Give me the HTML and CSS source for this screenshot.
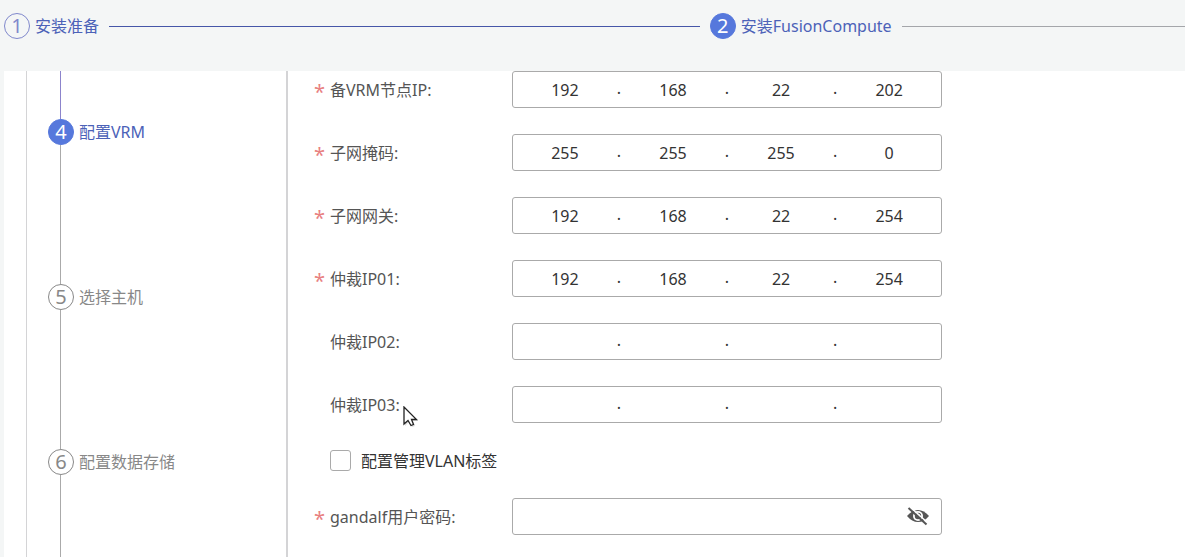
FILE: index.html
```html
<!DOCTYPE html>
<html lang="zh-CN">
<head>
<meta charset="utf-8">
<title>安装FusionCompute</title>
<link rel="stylesheet" href="styles.css">
</head>
<body>
<header class="steps">
  <div class="step step-done"><span class="num">1</span><span>安装准备</span></div>
  <span class="line line-done"></span>
  <div class="step step-active"><span class="num">2</span><span>安装FusionCompute</span></div>
  <span class="line line-next"></span>
</header>
<div class="main">
  <nav class="sidebar">
    <span class="rail rail-first"></span>
    <div class="step step-active"><span class="num">4</span><span>配置VRM</span></div>
    <span class="rail"></span>
    <div class="step step-todo"><span class="num">5</span><span>选择主机</span></div>
    <span class="rail"></span>
    <div class="step step-todo"><span class="num">6</span><span>配置数据存储</span></div>
    <span class="rail rail-last"></span>
  </nav>
  <form class="form">
    <div class="row">
      <span class="star">*</span><label class="label" for="vrm1">备VRM节点IP:</label>
      <div class="field"><input class="seg" id="vrm1" value="192"><span class="dot">.</span><input class="seg" aria-label="2" value="168"><span class="dot">.</span><input class="seg" aria-label="3" value="22"><span class="dot">.</span><input class="seg" aria-label="4" value="202"></div>
    </div>
    <div class="row">
      <span class="star">*</span><label class="label" for="mask1">子网掩码:</label>
      <div class="field"><input class="seg" id="mask1" value="255"><span class="dot">.</span><input class="seg" aria-label="2" value="255"><span class="dot">.</span><input class="seg" aria-label="3" value="255"><span class="dot">.</span><input class="seg" aria-label="4" value="0"></div>
    </div>
    <div class="row">
      <span class="star">*</span><label class="label" for="gw1">子网网关:</label>
      <div class="field"><input class="seg" id="gw1" value="192"><span class="dot">.</span><input class="seg" aria-label="2" value="168"><span class="dot">.</span><input class="seg" aria-label="3" value="22"><span class="dot">.</span><input class="seg" aria-label="4" value="254"></div>
    </div>
    <div class="row">
      <span class="star">*</span><label class="label" for="arb1">仲裁IP01:</label>
      <div class="field"><input class="seg" id="arb1" value="192"><span class="dot">.</span><input class="seg" aria-label="2" value="168"><span class="dot">.</span><input class="seg" aria-label="3" value="22"><span class="dot">.</span><input class="seg" aria-label="4" value="254"></div>
    </div>
    <div class="row">
      <span class="star"></span><label class="label" for="arb2">仲裁IP02:</label>
      <div class="field"><input class="seg" id="arb2"><span class="dot">.</span><input class="seg" aria-label="2"><span class="dot">.</span><input class="seg" aria-label="3"><span class="dot">.</span><input class="seg" aria-label="4"></div>
    </div>
    <div class="row">
      <span class="star"></span><label class="label" for="arb3">仲裁IP03:</label>
      <div class="field"><input class="seg" id="arb3"><span class="dot">.</span><input class="seg" aria-label="2"><span class="dot">.</span><input class="seg" aria-label="3"><span class="dot">.</span><input class="seg" aria-label="4"></div>
    </div>
    <div class="row row-check">
      <span class="star"></span><input class="check" type="checkbox" id="vlan"><label class="check-label" for="vlan">配置管理VLAN标签</label>
    </div>
    <div class="row">
      <span class="star">*</span><label class="label" for="pwd">gandalf用户密码:</label>
      <div class="field"><input class="pwd" type="password" id="pwd"><button class="eye" type="button" aria-label="显示密码"><svg width="22" height="20" viewBox="0 0 22 20"><path d="M0 9Q5 3 11 3T22 9Q17 15 11 15T0 9Z" fill="#555"/><circle cx="11" cy="9" r="5" fill="#fff"/><circle cx="11" cy="9" r="3.200" fill="#555"/><path d="M10.500 7.500Q12.500 7 12.500 9.500" fill="none" stroke="#fff" stroke-width="1.200"/><path d="M3 0L21 16" stroke="#fff" stroke-width="1.500"/><path d="M1.500 1L19.500 17.500" stroke="#555" stroke-width="2"/></svg></button></div>
    </div>
  </form>
</div>
<svg class="cursor" width="18" height="24" viewBox="0 0 18 24"><path d="M2 3V20L6 16L9 21L12 20L10 15H15Z" fill="#bbb" opacity=".5"/><path d="M1 1V18L5 14.500L8 19.500L10.500 18.500L8.500 13.500H13.500Z" fill="#fff" stroke="#222" stroke-width="1.300"/></svg>
</body>
</html>
```
FILE: styles.css
```css
* { box-sizing: border-box; }
body {
  margin: 0;
  height: 100vh;
  overflow: hidden;
  display: flex;
  flex-direction: column;
  background: #f4f6f6;
  color: #333;
  font: 16px/24px "Noto Sans", "Noto Sans CJK SC", sans-serif;
}
input, button { font: inherit; color: inherit; }
.steps {
  flex: none;
  display: flex;
  align-items: center;
  gap: 10px;
  padding: 13px 0 32px 4px;
}
.step {
  flex: none;
  display: flex;
  align-items: center;
  gap: 5px;
  height: 26px;
  white-space: nowrap;
}
.num {
  width: 26px;
  height: 26px;
  border: 1px solid currentColor;
  border-radius: 50%;
  font-size: 20px;
  line-height: 24px;
  text-align: center;
}
.step-done, .step-active { color: #4c62b8; }
.step-done .num { color: #8088cc; }
.step-active .num {
  background: #5678dc;
  border-color: #5678dc;
  color: #fff;
}
.step-todo { color: #888; }
.line { height: 1px; }
.line-done { flex: 590 1 0; background: #4656a8; }
.line-next { flex: 283 1 0; background: #a4a6aa; }
.main {
  flex: 1;
  min-height: 0;
  display: flex;
  margin-left: 4px;
  padding-left: 22px;
  background: #fff;
}
.sidebar {
  flex: 0 0 262px;
  display: flex;
  flex-direction: column;
  padding-left: 21px;
  border: solid #d4d4d6;
  border-width: 0 2px 0 1px;
}
.rail {
  flex: 0 0 139px;
  width: 1px;
  margin-left: 12px;
  background: #aaa;
}
.rail-first { flex-basis: 48px; background: #8c84cc; }
.rail-last { flex: 1 1 0; }
.form {
  flex: 1;
  display: flex;
  flex-direction: column;
  gap: 26px;
  padding: 0 24px 0 26px;
}
.row { display: flex; align-items: center; flex: none; }
.star {
  flex: 0 0 16px;
  height: 24px;
  color: #e88080;
  font-size: 20px;
  line-height: 28px;
}
.label { flex: 0 0 182px; color: #555; }
.field {
  flex: 0 1 430px;
  min-width: 0;
  height: 37px;
  display: flex;
  align-items: center;
  border: 1px solid #aaa;
  border-radius: 3px;
  background: #fff;
}
.seg, .pwd {
  flex: 1;
  width: 0;
  min-width: 0;
  height: 32px;
  padding: 0;
  border: 0;
  outline: 0;
  background: none;
}
.seg { text-align: center; }
.dot { flex: 0 0 4px; line-height: 24px; padding-bottom: 4px; }
.row-check { height: 23px; }
.check {
  appearance: none;
  width: 21px;
  height: 21px;
  margin: 0 10px 0 0;
  border: 1px solid #aaa;
  border-radius: 3px;
  background: #fff;
}
.eye {
  display: flex;
  margin-right: 12px;
  padding: 0;
  border: 0;
  background: none;
}
.pwd { padding-left: 10px; }
.cursor { position: absolute; left: 403px; top: 406px; }
```
